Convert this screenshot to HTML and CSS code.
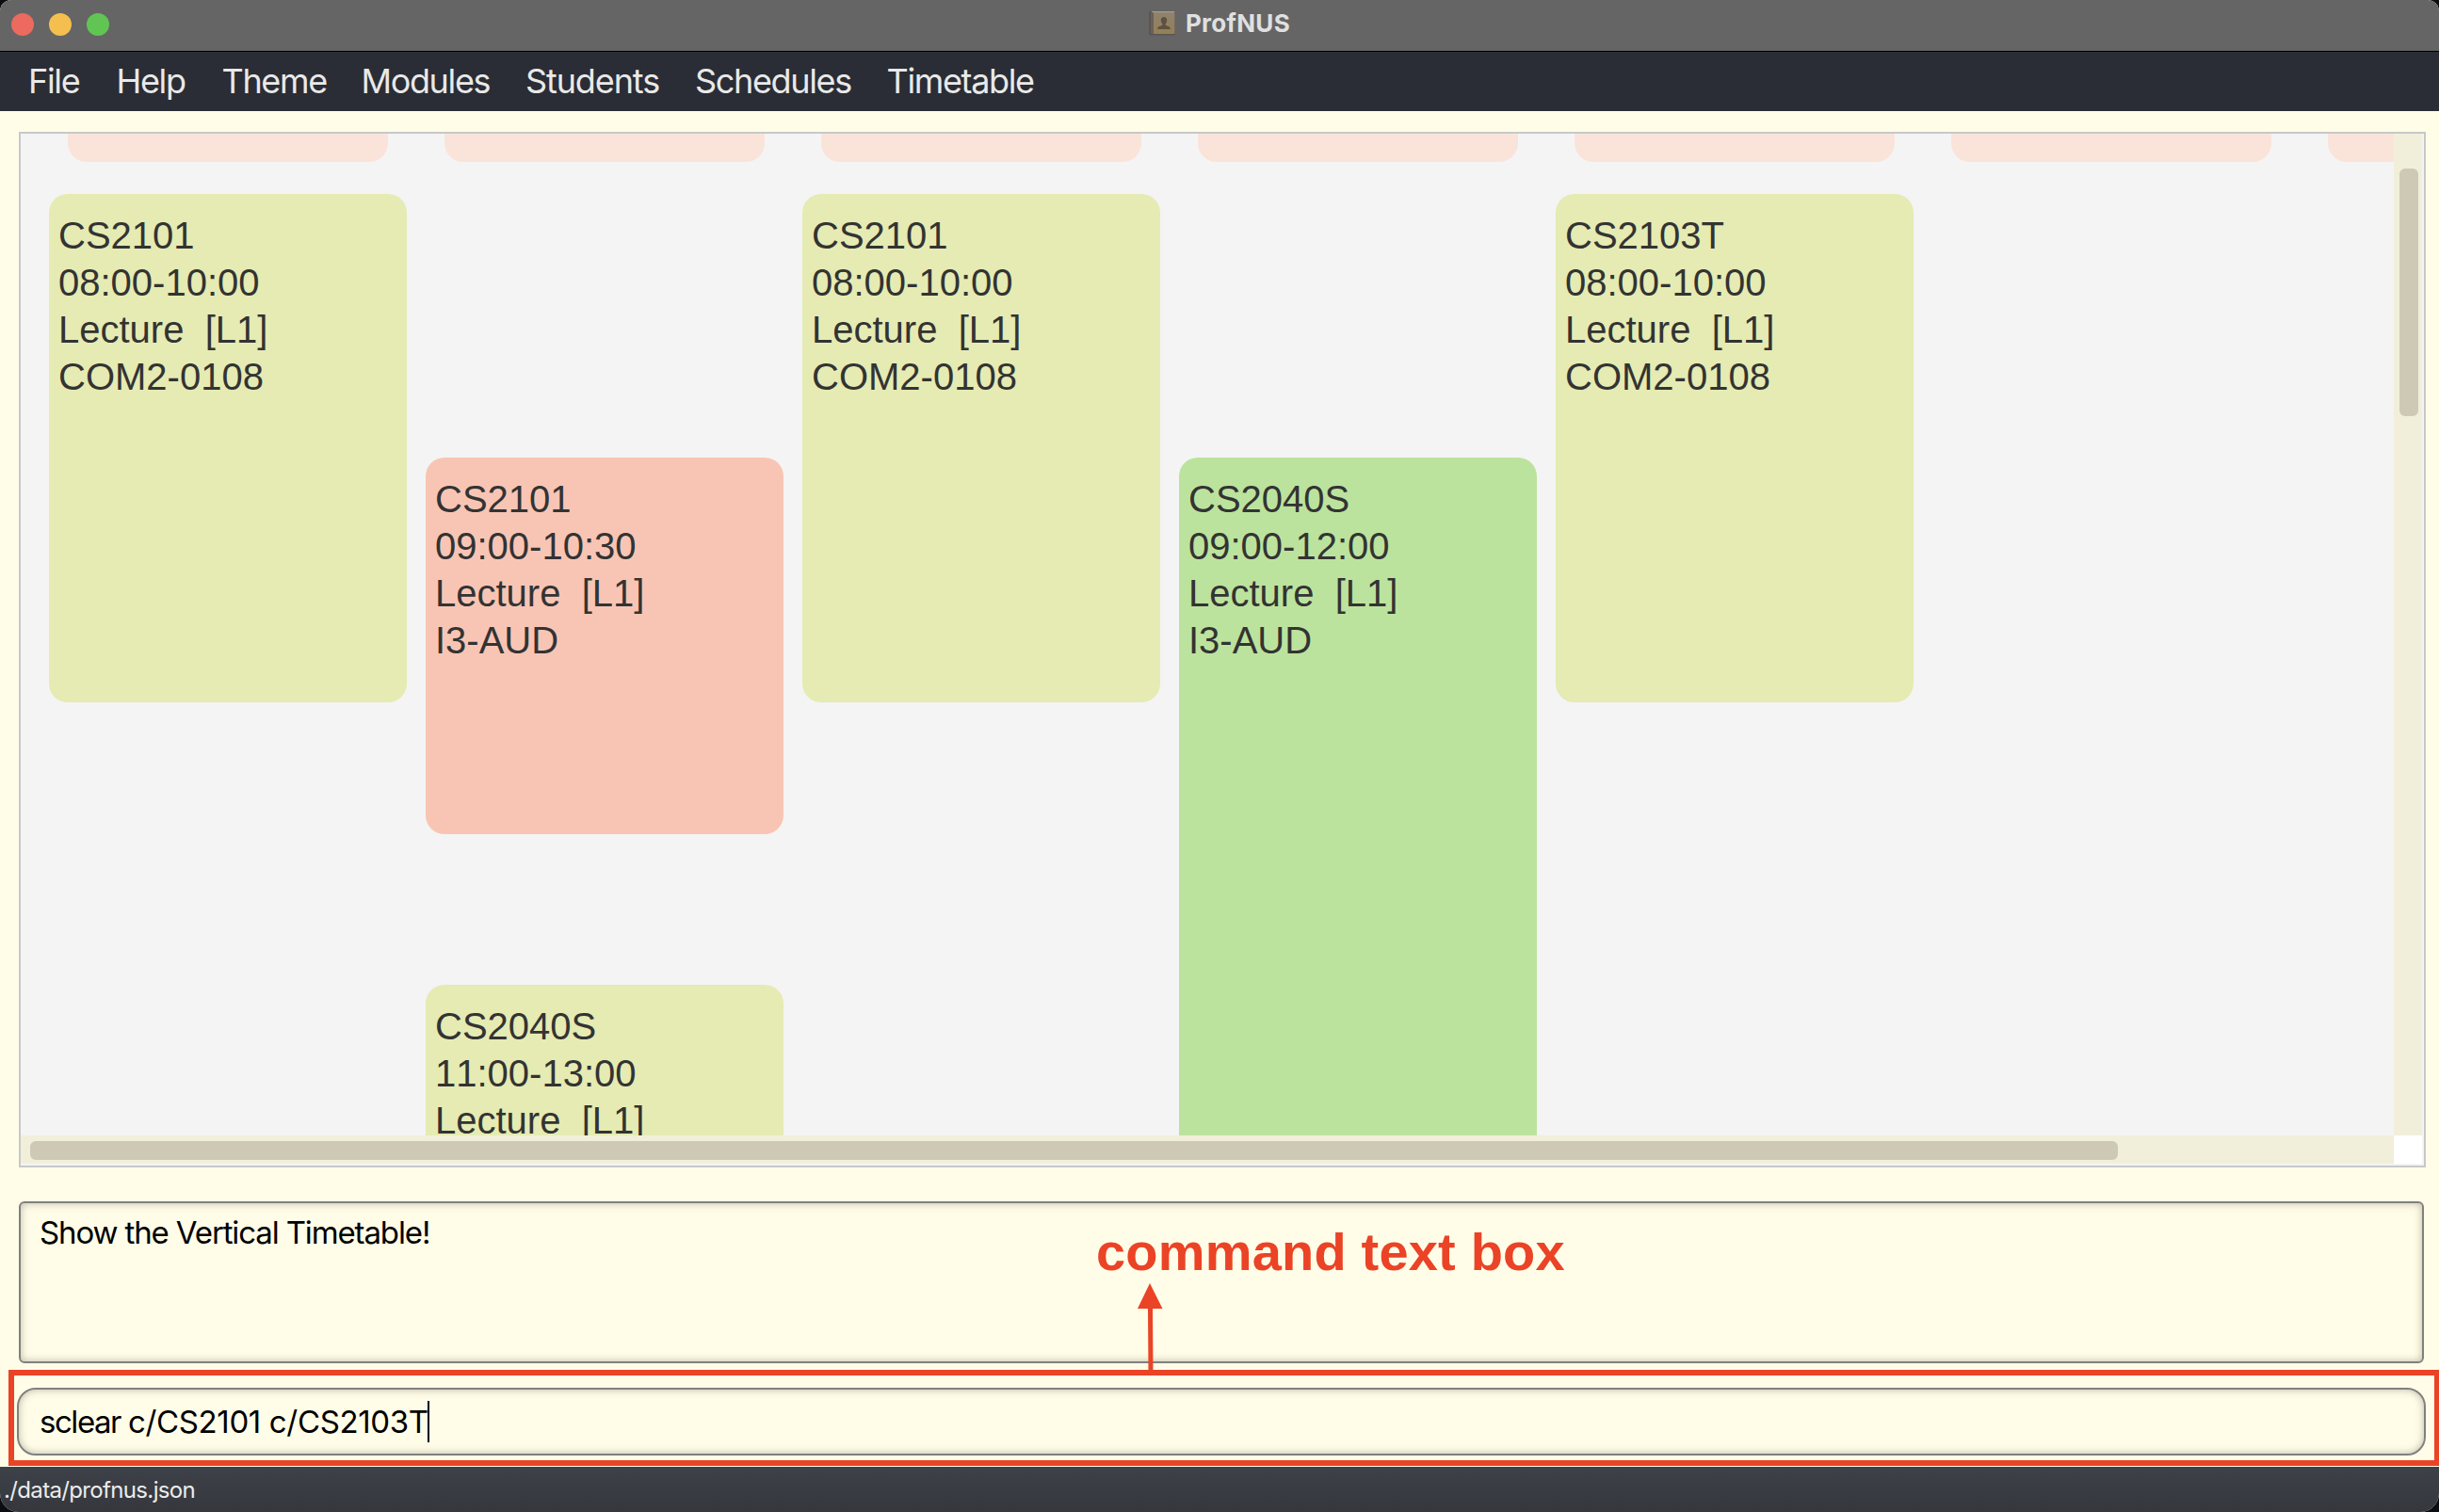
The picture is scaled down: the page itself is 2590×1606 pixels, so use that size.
FILE: index.html
```html
<!DOCTYPE html>
<html lang="en">
<head>
  <meta charset="utf-8">
  <title>ProfNUS</title>
  <link rel="stylesheet" href="styles.css">
</head>
<body>
  <div class="window">
    <header class="titlebar">
      <div class="lights">
        <span class="light light-close"></span>
        <span class="light light-minimize"></span>
        <span class="light light-zoom"></span>
      </div>
      <div class="title">
        <svg class="title-icon" width="28" height="27" viewBox="0 0 28 27">
          <defs>
            <linearGradient id="cover" x1="0" y1="0" x2="0" y2="1">
              <stop offset="0" stop-color="#8f8270"/>
              <stop offset="1" stop-color="#957f56"/>
            </linearGradient>
          </defs>
          <rect x="0" y="1" width="28" height="25.5" rx="1.5" fill="#5a5654"/>
          <rect x="5" y="1" width="22.5" height="24" rx="1" fill="url(#cover)"/>
          <rect x="3" y="1" width="24" height="1.2" fill="#a79c8c"/>
          <rect x="2" y="2" width="3" height="23" fill="#6a605a"/>
          <path d="M16 7c2 0 3.200 1.400 3.200 3.400 0 1.800-.7 3-1.500 3.800v1.600c1.800 1 5.300 1.200 5.300 4.200H9c0-3 3.500-3.200 5.300-4.200v-1.600c-.8-.8-1.500-2-1.500-3.800C12.800 8.400 14 7 16 7z" fill="#5d5240"/>
        </svg>
        <span>ProfNUS</span>
      </div>
    </header>

    <nav class="menubar">
      <span>File</span>
      <span>Help</span>
      <span>Theme</span>
      <span>Modules</span>
      <span class="loose">Students</span>
      <span>Schedules</span>
      <span>Timetable</span>
    </nav>

    <main class="content">
      <section class="scroll-pane">
        <div class="viewport">
          <div class="days">
            <div class="day"></div><div class="day"></div><div class="day"></div><div class="day"></div>
            <div class="day"></div><div class="day"></div><div class="day"></div>
          </div>
          <div class="timetable">
            <article class="lesson lime mon-8"><p>CS2101</p><p>08:00-10:00</p><p>Lecture  [L1]</p><p>COM2-0108</p></article>
            <article class="lesson coral tue-9"><p>CS2101</p><p>09:00-10:30</p><p>Lecture  [L1]</p><p>I3-AUD</p></article>
            <article class="lesson lime tue-11"><p>CS2040S</p><p>11:00-13:00</p><p>Lecture  [L1]</p></article>
            <article class="lesson lime wed-8"><p>CS2101</p><p>08:00-10:00</p><p>Lecture  [L1]</p><p>COM2-0108</p></article>
            <article class="lesson green thu-9"><p>CS2040S</p><p>09:00-12:00</p><p>Lecture  [L1]</p><p>I3-AUD</p></article>
            <article class="lesson lime fri-8"><p>CS2103T</p><p>08:00-10:00</p><p>Lecture  [L1]</p><p>COM2-0108</p></article>
          </div>
        </div>
        <div class="track track-v"><div class="thumb"></div></div>
        <div class="track track-h"><div class="thumb"></div></div>
        <div class="corner"></div>
      </section>

      <section class="result">Show the Vertical Timetable!</section>

      <section class="command"><span class="input"><span class="verb">sclear </span>c/CS2101 c/CS2103T</span><i class="caret"></i></section>
    </main>

    <footer class="statusbar">./data/profnus.json</footer>

    <div class="callout-frame"></div>
    <div class="callout-label">command text box</div>
    <svg class="callout-arrow" width="30" height="96" viewBox="0 0 30 96">
      <path d="M14 1L27.500 28H17L17.500 96H12.500L12 28H1z" fill="#eb4326"/>
    </svg>
  </div>
</body>
</html>
```
FILE: styles.css
```css
* { box-sizing: border-box; }

body {
  margin: 0;
  background: #0c0d12;
  font-family: Inter, "Liberation Sans", sans-serif;
}

.window {
  position: relative;
  display: flex;
  flex-direction: column;
  width: 2590px;
  height: 1606px;
  overflow: hidden;
  border-radius: 12px 12px 20px 20px;
  background: #fffde8;
}

/* Title bar */
.titlebar {
  display: grid;
  grid-template-columns: 1fr auto 1fr;
  align-items: start;
  height: 55px;
  background: #656565;
  border-bottom: 1px solid #000;
}
.lights { display: flex; gap: 16px; padding: 14px 0 0 12px; }
.light { width: 24px; height: 24px; border-radius: 50%; }
.light-close { background: #ed6a5e; }
.light-minimize { background: #f5bf4f; }
.light-zoom { background: #61c554; }
.title {
  display: flex;
  align-items: center;
  gap: 11px;
  height: 49px;
  font-size: 26px;
  font-weight: 700;
  letter-spacing: 0.3px;
  color: #e0e0e0;
}

/* Menu bar */
.menubar {
  display: grid;
  grid-template-columns: 93.5px 112px 148px 174.500px 180px 203.500px auto;
  height: 63px;
  padding-left: 30px;
  background: #2a2d35;
  color: #e9e9e9;
  font-size: 36px;
  line-height: 62px;
  letter-spacing: -1.35px;
}
.loose { letter-spacing: -1.1px; }

/* Main area */
.content {
  display: flex;
  flex-direction: column;
  height: 1440px;
  padding: 22px 14px 12px 18px;
}

.scroll-pane {
  display: grid;
  grid-template: 1064px 30px / 2520px 30px;
  width: 2556px;
  height: 1100px;
  margin-left: 2px;
  border: 2px solid #c8c8c8;
  background: #f4f4f4;
}
.viewport { overflow: hidden; padding-left: 30px; }
.days, .timetable {
  display: grid;
  grid-template-columns: repeat(7, 380px);
  column-gap: 20px;
}
.day {
  height: 30px;
  margin: 0 20px;
  border-radius: 0 0 20px 20px;
  background: #fae4da;
}
/* One row per half hour, starting at 08:00 */
.timetable {
  grid-auto-rows: 120px;
  row-gap: 20px;
  margin-top: 34px;
}
.lesson {
  padding: 19px 10px;
  border-radius: 20px;
  color: #333;
  font: 40px/50px "Liberation Sans", sans-serif;
  font-kerning: none;
  white-space: pre;
}
.lesson p { margin: 0; }
.lime { background: #e5ebb2; }
.coral { background: #f8c5b5; }
.green { background: #bce39d; }
.mon-8 { grid-area: 1 / 1 / span 4; }
.tue-9 { grid-area: 3 / 2 / span 3; }
.tue-11 { grid-area: 7 / 2 / span 4; }
.wed-8 { grid-area: 1 / 3 / span 4; }
.thu-9 { grid-area: 3 / 4 / span 6; }
.fri-8 { grid-area: 1 / 5 / span 4; }

.track { background: #f1efda; }
.track-v { padding: 37px 4px 0 6px; }
.track-v .thumb { height: 263px; }
.track-h { padding: 6px 0 4px 10px; }
.track-h .thumb { width: 2217px; height: 20px; }
.thumb { border-radius: 6px; background: #cdc9b5; }
.corner { background: #fff; }

.result {
  width: 2554px;
  height: 172px;
  margin: 36px 0 0 2px;
  padding: 11px 20px;
  border: 2px solid #808080;
  border-radius: 6px;
  box-shadow: inset 0 0 9px rgba(90, 90, 70, 0.42);
  color: #000;
  font-size: 33px;
  line-height: 40px;
  letter-spacing: -1.13px;
}

.command {
  display: flex;
  align-items: center;
  width: 2558px;
  height: 72px;
  margin-top: 26px;
  padding-left: 22px;
  border: 2px solid #808080;
  border-radius: 20px;
  box-shadow: inset 0 0 9px rgba(90, 90, 70, 0.42);
  color: #000;
  font-size: 33px;
  letter-spacing: -0.35px;
}
.input { white-space: pre; }
.verb { letter-spacing: -1.45px; }
.caret { width: 2px; height: 44px; margin-left: -1px; background: #000; }

.statusbar {
  height: 48px;
  padding-left: 4px;
  background: linear-gradient(#3d4148, #35373d);
  color: #ececec;
  font-size: 24px;
  line-height: 49px;
  letter-spacing: -0.65px;
}

/* Callout drawn over the window */
.callout-frame {
  position: absolute;
  left: 9px;
  top: 1455px;
  width: 2582px;
  height: 102px;
  border: 6px solid #eb4326;
}
.callout-label {
  position: absolute;
  left: 1164px;
  top: 1298px;
  color: #eb4326;
  font: 700 56px/64px "Liberation Sans", sans-serif;
  letter-spacing: 0.19px;
  white-space: nowrap;
}
.callout-arrow { position: absolute; left: 1207px; top: 1362px; }
```
